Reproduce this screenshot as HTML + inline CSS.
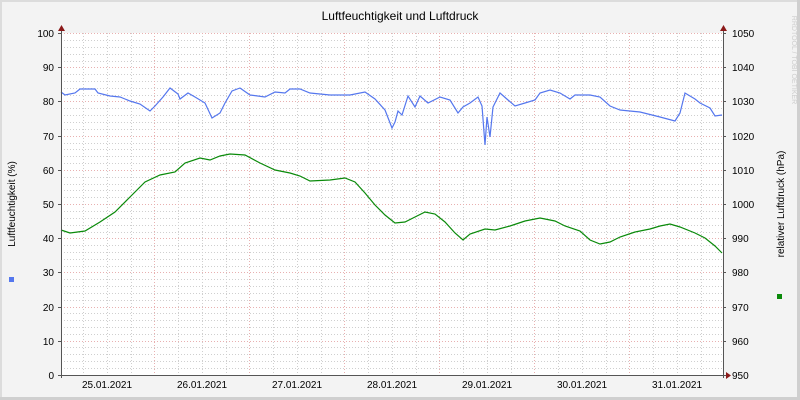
<!DOCTYPE html>
<html><head><meta charset="utf-8"><style>
html,body{margin:0;padding:0;background:#f3f3f3}
svg{display:block}
text{font-family:"Liberation Sans",sans-serif;font-size:10px;fill:#000}
</style></head><body>
<svg width="800" height="400" xmlns="http://www.w3.org/2000/svg">
<rect x="0" y="0" width="800" height="400" fill="#f3f3f3"/>
<rect x="0" y="0" width="800" height="2" fill="#dcdcdc"/>
<rect x="0" y="0" width="2" height="400" fill="#dcdcdc"/>
<rect x="797" y="0" width="3" height="400" fill="#cfcfcf"/>
<rect x="0" y="397" width="800" height="3" fill="#cfcfcf"/>
<rect x="61" y="33" width="662" height="342" fill="#fff"/>
<g stroke="#cfcfcf" stroke-width="1" stroke-dasharray="1,2" shape-rendering="crispEdges">
<path d="M61 40.5H723M61 47.5H723M61 54.5H723M61 61.5H723M61 74.5H723M61 81.5H723M61 88.5H723M61 95.5H723M61 108.5H723M61 115.5H723M61 122.5H723M61 129.5H723M61 143.5H723M61 149.5H723M61 156.5H723M61 163.5H723M61 177.5H723M61 184.5H723M61 190.5H723M61 197.5H723M61 211.5H723M61 218.5H723M61 225.5H723M61 232.5H723M61 245.5H723M61 252.5H723M61 259.5H723M61 266.5H723M61 279.5H723M61 286.5H723M61 293.5H723M61 300.5H723M61 313.5H723M61 320.5H723M61 327.5H723M61 334.5H723M61 347.5H723M61 354.5H723M61 361.5H723M61 368.5H723"/>
<path d="M83.5 33V375M107.5 33V375M131.5 33V375M178.5 33V375M202.5 33V375M226.5 33V375M273.5 33V375M297.5 33V375M321.5 33V375M368.5 33V375M392.5 33V375M416.5 33V375M463.5 33V375M487.5 33V375M511.5 33V375M558.5 33V375M582.5 33V375M606.5 33V375M653.5 33V375M677.5 33V375M701.5 33V375"/>
</g>
<g stroke="#e8b0b0" stroke-width="1" stroke-dasharray="1,2" shape-rendering="crispEdges">
<path d="M61 33.5H723M61 67.5H723M61 101.5H723M61 136.5H723M61 170.5H723M61 204.5H723M61 238.5H723M61 272.5H723M61 307.5H723M61 341.5H723"/>
<path d="M154.5 33V375M249.5 33V375M344.5 33V375M439.5 33V375M534.5 33V375M629.5 33V375"/>
</g>
<polyline fill="none" stroke="#0a8a0a" stroke-width="1.2" points="61,230 70,233 85,231 100,222 115,212 130,197 145,182 160,175 175,172 185,163 200,158 210,160 220,156 230,154 245,155 260,163 275,170 290,173 300,176 310,181 330,180 345,178 355,182 365,193 375,205 385,215 395,223 405,222 415,217 425,212 435,214 445,222 455,233 463,240 470,234 485,229 495,230 510,226 525,221 540,218 555,221 565,226 580,231 590,240 600,244 610,242 620,237 635,232 650,229 660,226 670,224 680,227 695,233 705,238 715,246 722,253"/>
<polyline fill="none" stroke="#5577ee" stroke-width="1.2" points="61,92 65,95 75,93 80,89 95,89 98,93 110,96 120,97 125,99 130,101 140,104 150,111 155,106 163,97 170,88 178,94 180,99 188,93 195,97 205,103 212,118 220,113 225,103 232,91 240,88 250,95 265,97 275,92 285,93 290,89 300,89 310,93 330,95 350,95 365,92 375,99 385,110 392,128 395,122 398,111 402,115 408,96 415,107 420,96 428,103 440,97 450,100 458,113 463,107 470,103 478,97 482,106 485,145 487,117 490,137 493,107 500,93 508,100 515,106 525,103 535,100 540,93 550,90 560,93 570,99 575,95 590,95 600,97 610,106 620,110 640,112 660,117 675,121 680,113 685,93 695,99 700,103 710,108 715,116 722,115"/>
<g stroke="#555" stroke-width="1" shape-rendering="crispEdges">
<path d="M61.5 30V378M723.5 30V378M58 375.5H726"/>
<path d="M58 33.5H61M58 67.5H61M58 101.5H61M58 136.5H61M58 170.5H61M58 204.5H61M58 238.5H61M58 272.5H61M58 307.5H61M58 341.5H61"/>
<path d="M723 33.5H726M723 67.5H726M723 101.5H726M723 136.5H726M723 170.5H726M723 204.5H726M723 238.5H726M723 272.5H726M723 307.5H726M723 341.5H726"/>
</g>
<path d="M58 31L61.5 25L65 31Z M720 31L723.5 25L727 31Z M726 372L731 375.5L726 379Z" fill="#8b1a1a"/>
<text x="400" y="20" text-anchor="middle" style="font-size:12px">Luftfeuchtigkeit und Luftdruck</text>
<g text-anchor="end">
<text x="54" y="37">100</text><text x="54" y="71">90</text><text x="54" y="105">80</text><text x="54" y="140">70</text><text x="54" y="174">60</text><text x="54" y="208">50</text><text x="54" y="242">40</text><text x="54" y="276">30</text><text x="54" y="311">20</text><text x="54" y="345">10</text><text x="54" y="379">0</text>
</g>
<g>
<text x="732" y="37">1050</text><text x="732" y="71">1040</text><text x="732" y="105">1030</text><text x="732" y="140">1020</text><text x="732" y="174">1010</text><text x="732" y="208">1000</text><text x="732" y="242">990</text><text x="732" y="276">980</text><text x="732" y="311">970</text><text x="732" y="345">960</text><text x="732" y="379">950</text>
</g>
<g text-anchor="middle">
<text x="107" y="388">25.01.2021</text><text x="202" y="388">26.01.2021</text><text x="297" y="388">27.01.2021</text><text x="392" y="388">28.01.2021</text><text x="487" y="388">29.01.2021</text><text x="582" y="388">30.01.2021</text><text x="677" y="388">31.01.2021</text>
</g>
<text transform="translate(15,204) rotate(-90)" text-anchor="middle">Luftfeuchtigkeit (%)</text>
<text transform="translate(784,204) rotate(-90)" text-anchor="middle">relativer Luftdruck (hPa)</text>
<text transform="translate(792,60) rotate(90)" text-anchor="middle" style="font-size:7px;fill:#ccc">RRDTOOL / TOBI OETIKER</text>
<rect x="9" y="277" width="5" height="5" fill="#5577ee"/>
<rect x="777" y="294" width="5" height="5" fill="#0a8a0a"/>
</svg>
</body></html>
